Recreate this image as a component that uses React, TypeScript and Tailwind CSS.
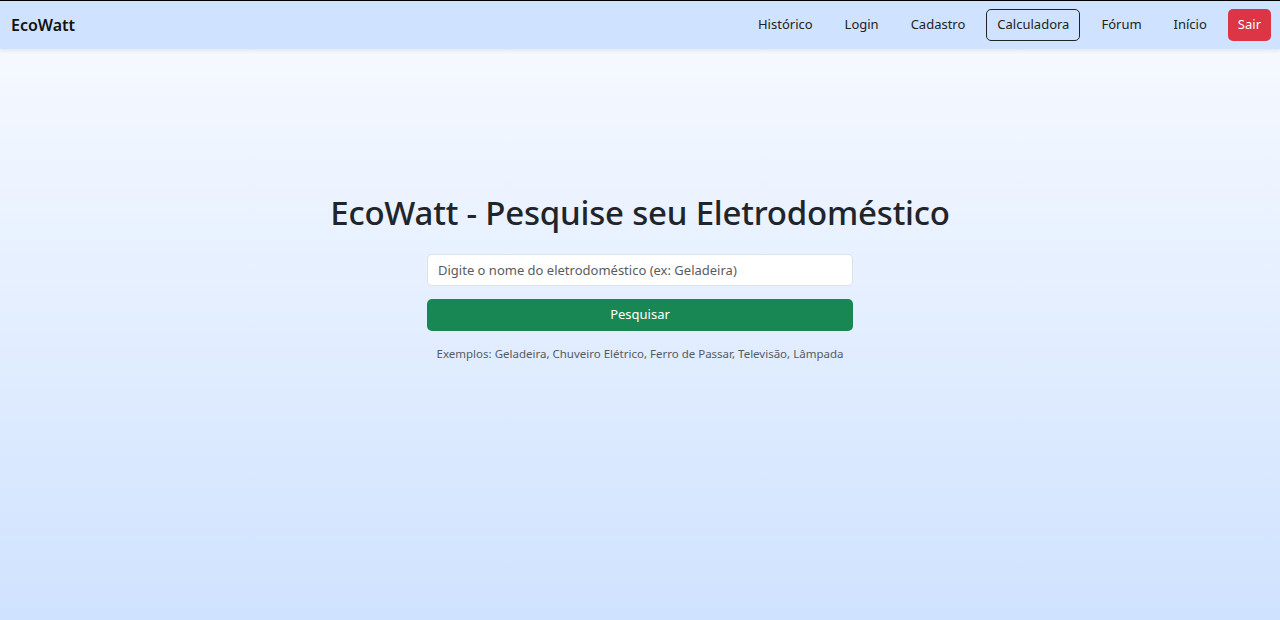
import React from "react";

export default function App() {
  const font = { fontFamily: '"Noto Sans", "Open Sans", sans-serif' };
  return (
    <div className="min-h-[620px] flex flex-col bg-gradient-to-b from-[#f9fbff] to-[#cfe2ff]" style={font}>
      <nav className="h-[49px] bg-[#cfe2ff] border-t border-black flex items-center justify-between pl-[11px] pr-[9px] shadow-[0_2px_4px_rgba(0,0,0,0.08)]">
        <span className="text-[16px] font-semibold text-[#111]">EcoWatt</span>
        <div className="flex items-center text-[13px] text-[#222]">
          <a className="px-[16px]">Histórico</a>
          <a className="px-[16px]">Login</a>
          <a className="px-[16px]">Cadastro</a>
          <a className="ml-[5px] mr-[5px] px-[10px] h-[32px] flex items-center border border-[#212529] rounded-[5px]">Calculadora</a>
          <a className="px-[16px]">Fórum</a>
          <a className="px-[16px]">Início</a>
          <a className="ml-[5px] px-[10px] h-[32px] flex items-center bg-[#dc3545] text-white rounded-[5px]">Sair</a>
        </div>
      </nav>
      <main className="flex flex-col items-center pt-[144px]">
        <h1 className="text-[33px] font-medium text-[#212529] leading-[1.2] tracking-[-0.2px]">EcoWatt - Pesquise seu Eletrodoméstico</h1>
        <input
          className="mt-[21px] w-[426px] h-[32px] bg-white border border-[#dee2e6] rounded-[5px] px-[10px] text-[13px] outline-none placeholder:text-[#595c5f]"
          placeholder="Digite o nome do eletrodoméstico (ex: Geladeira)"
          style={font}
        />
        <button className="mt-[13px] w-[426px] h-[32px] bg-[#198754] text-white rounded-[5px] text-[13px]" style={font}>
          Pesquisar
        </button>
        <p className="mt-[14px] text-[11.5px] text-[#555a5f]">Exemplos: Geladeira, Chuveiro Elétrico, Ferro de Passar, Televisão, Lâmpada</p>
      </main>
    </div>
  );
}
